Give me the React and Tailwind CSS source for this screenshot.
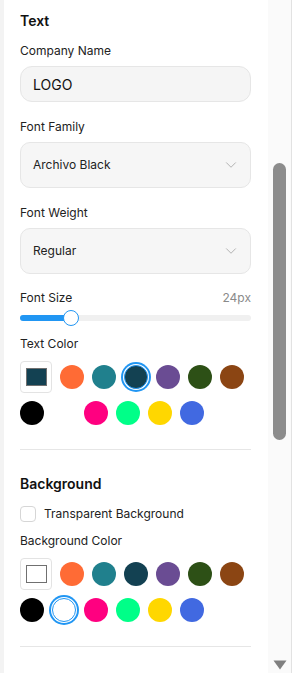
import { ChevronDown } from "lucide-react";

const COLORS = [
  "#ff6b35",
  "#20808d",
  "#134152",
  "#6a4c93",
  "#2d5016",
  "#8b4513",
  "#000000",
  "#ffffff",
  "#ff0080",
  "#00ff88",
  "#ffd700",
  "#4169e1",
];

function Swatches({ value, selected }) {
  return (
    <div className="flex flex-wrap items-center gap-2">
      <div className="flex h-8 w-8 items-center justify-center rounded-[4px] border border-[#e3e3e3] bg-white">
        <div
          className="h-[18px] w-[21px] border border-[#707070]"
          style={{ backgroundColor: value }}
        />
      </div>
      {COLORS.map((c) => (
        <button
          key={c}
          className={
            c === selected
              ? "h-6 w-6 rounded-full border-[1.5px] border-[#2196f3] shadow-[0_0_0_1px_#ffffff,0_0_0_3px_#2196f3]"
              : "h-6 w-6 rounded-full"
          }
          style={{ backgroundColor: c }}
        />
      ))}
    </div>
  );
}

function Select({ label, value }) {
  return (
    <div className="mb-[17px]">
      <div className="mb-[7px] text-[12px] leading-4 text-[#222]">{label}</div>
      <div className="flex h-[46px] items-center justify-between rounded-[10px] border border-[#e6e6e6] bg-[#f6f6f6] pl-3 pr-[10px] text-[12px] text-[#222]">
        <span>{value}</span>
        <ChevronDown size={18} strokeWidth={1.3} className="text-[#b0b0b0]" />
      </div>
    </div>
  );
}

export default function App() {
  return (
    <div className="flex h-[673px] w-[295px] overflow-hidden bg-white font-['Inter',sans-serif] text-[#1a1a1a]">
      <div className="w-1 shrink-0 bg-[#f3f3f3]" />

      <div className="w-[264px] shrink-0 bg-white pl-4 pr-[17px] pt-[11px]">
        <h2 className="mb-3 text-[14px] font-semibold leading-5 text-[#111]">Text</h2>

        <div className="mb-[17px]">
          <div className="mb-[7px] text-[12px] leading-4 text-[#222]">Company Name</div>
          <div className="flex h-9 items-center rounded-[12px] border border-[#e6e6e6] bg-[#f5f5f5] px-3 text-[14px] text-[#111]">
            LOGO
          </div>
        </div>

        <Select label="Font Family" value="Archivo Black" />
        <Select label="Font Weight" value="Regular" />

        <div className="-mt-px flex items-center justify-between text-[12px] leading-4">
          <span className="text-[#222]">Font Size</span>
          <span className="text-[#8a8a8a]">24px</span>
        </div>
        <div className="relative mt-1 flex h-4 items-center">
          <div className="h-[6px] w-full rounded-full bg-[#f0f0f0]">
            <div className="h-full w-[51px] rounded-full bg-[#2196f3]" />
          </div>
          <div className="absolute left-[43px] top-0 h-4 w-4 rounded-full border border-[#2196f3] bg-white" />
        </div>

        <div className="mb-[9px] mt-[10px] text-[12px] leading-4 text-[#222]">Text Color</div>
        <Swatches value="#134152" selected="#134152" />

        <div className="mt-6 h-px bg-[#e6e6e6]" />

        <h2 className="mt-6 text-[14px] font-semibold leading-5 text-[#111]">Background</h2>

        <label className="mt-3 flex items-center gap-2 text-[12px] leading-4 text-[#222]">
          <span className="h-4 w-4 rounded-[4px] border border-[#d6d6d6] bg-white" />
          Transparent Background
        </label>

        <div className="mb-[9px] mt-[11px] text-[12px] leading-4 text-[#222]">Background Color</div>
        <Swatches value="#ffffff" selected="#ffffff" />

        <div className="mt-6 h-px bg-[#e6e6e6]" />
      </div>

      <div className="flex w-[23px] shrink-0 flex-col items-center bg-[#fafafa] pt-[163px]">
        <div className="h-[277px] w-[13px] rounded-full bg-[#8c8c8c]" />
        <div className="flex-1" />
        <svg width="14" height="10" viewBox="0 0 14 10" className="mb-[3px]">
          <path d="M0.5 0.5 H13.5 L7 9.5 Z" fill="#7f7f7f" />
        </svg>
      </div>
      <div className="w-px shrink-0 bg-[#e2e2e2]" />
      <div className="flex-1 bg-white" />
    </div>
  );
}
